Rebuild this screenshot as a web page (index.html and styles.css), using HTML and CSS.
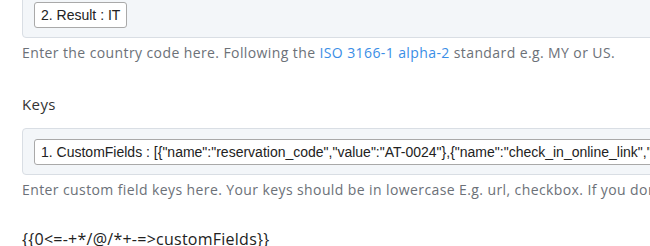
FILE: index.html
```html
<!DOCTYPE html>
<html>
<head>
<meta charset="utf-8">
<link rel="stylesheet" href="styles.css">
</head>
<body>
<div class="page">
  <div class="field first">
    <div class="tagbox"><span class="tag">2. Result : IT</span></div>
    <p class="help">Enter the country code here. Following the <a class="link">ISO 3166-1 alpha-2</a> standard e.g. MY or US.</p>
  </div>
  <div class="field">
    <label class="label">Keys</label>
    <div class="tagbox"><span class="tag">1. CustomFields : [{"name":"reservation_code","value":"AT-0024"},{"name":"check_in_online_link","value":"https://example.com"}]</span></div>
    <p class="help">Enter custom field keys here. Your keys should be in lowercase E.g. url, checkbox. If you don't know your keys, please check the documentation.</p>
  </div>
  <div class="code">{{0&lt;=-+*/@/*+-=&gt;customFields}}</div>
</div>
</body>
</html>
```

FILE: styles.css
```css
html, body {
  margin: 0;
  padding: 0;
  background: #ffffff;
  overflow: hidden;
}
.page {
  width: 650px;
  height: 246px;
  overflow: hidden;
  padding-left: 22px;
  box-sizing: border-box;
  font-family: "Open Sans", "Noto Sans", sans-serif;
  font-size: 14px;
  letter-spacing: 0.4px;
}
.field.first {
  margin-top: -9px;
}
.tagbox {
  width: 700px;
  box-sizing: border-box;
  background: #f3f6f9;
  border: 1px solid #d9dee4;
  border-radius: 4px;
  padding: 10px 11px 9px;
  white-space: nowrap;
  overflow: hidden;
}
.tag {
  display: inline-block;
  height: 26px;
  line-height: 24px;
  box-sizing: border-box;
  padding: 0 6px;
  background: #ffffff;
  border: 1px solid #a9a9a9;
  border-radius: 3px;
  font-family: "Liberation Sans", Arial, sans-serif;
  font-size: 14px;
  letter-spacing: 0;
  color: #222;
  vertical-align: top;
}
.help {
  margin: 4px 0 0;
  line-height: 22px;
  color: #6c7178;
  white-space: nowrap;
}
.link {
  color: #3a8ee6;
  text-decoration: none;
}
.label {
  display: block;
  margin-top: 30px;
  margin-bottom: 14px;
  font-size: 15px;
  line-height: 20px;
  color: #333;
}
.code {
  margin-top: 28px;
  font-size: 16px;
  letter-spacing: 0.25px;
  line-height: 20px;
  color: #222;
}
```
